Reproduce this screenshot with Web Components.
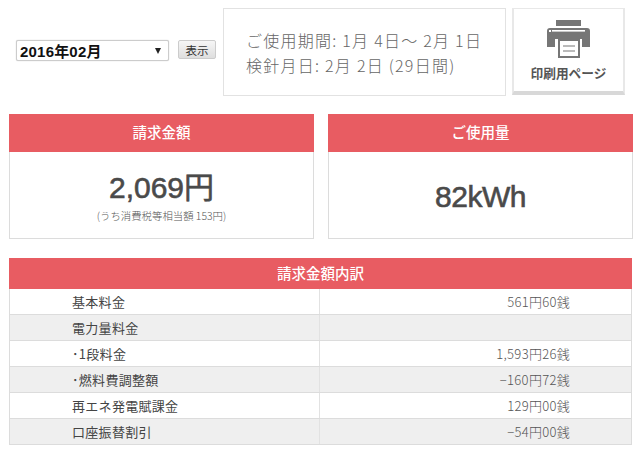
<!DOCTYPE html>
<html lang="ja">
<head>
<meta charset="utf-8">
<title>請求金額</title>
<style>
html, body { margin: 0; background: #fff; }
body { width: 640px; height: 452px; overflow: hidden; font-family: "Liberation Sans", "Noto Sans CJK JP", sans-serif; color: #444; }
</style>
</head>
<body>
<bill-page></bill-page>
<script>
'use strict';

class MonthPicker extends HTMLElement {
	constructor() {
		super();
		this.attachShadow({ mode: 'open' }).innerHTML = `
			<style>
				:host { display: flex; align-items: flex-start; gap: 9px; margin: 32px 7px 0 16px; }
				.select { box-sizing: border-box; width: 153px; height: 21px; display: flex; align-items: center; justify-content: space-between;
					padding: 0 7px 0 3px; border: 1px solid #ccc; border-radius: 2px; background: #fff; box-shadow: 0 0 1px #bbb;
					font: bold 15px "Liberation Sans", "Noto Sans CJK JP", sans-serif; letter-spacing: 0.200px; color: #111; }
				.arrow { width: 0; height: 0; border: 3px solid transparent; border-top: 6px solid #222; border-bottom: 0; }
				button { box-sizing: border-box; width: 38px; height: 19px; padding: 0; border: 1px solid #ccc; border-radius: 2px;
					background: linear-gradient(#f6f6f6, #dedede); font: 11.500px "Noto Sans CJK JP", sans-serif; color: #333; }
			</style>
			<div class="select"><span>2016年02月</span><span class="arrow"></span></div>
			<button type="button">表示</button>
		`;
	}
}

class PeriodBox extends HTMLElement {
	constructor() {
		super();
		this.attachShadow({ mode: 'open' }).innerHTML = `
			<style>
				:host { box-sizing: border-box; display: block; width: 283px; height: 88px; margin-right: 6px; padding: 19px 0 0 22px;
					border: 1px solid #e2e2e2; font: 300 16px/25px "Noto Sans CJK JP", sans-serif; letter-spacing: 1.250px; color: #666; white-space: nowrap; }
			</style>
			<div>ご使用期間: 1月 4日～ 2月 1日</div>
			<div>検針月日: 2月 2日 (29日間)</div>
		`;
	}
}

class PrintButton extends HTMLElement {
	constructor() {
		super();
		this.attachShadow({ mode: 'open' }).innerHTML = `
			<style>
				:host { box-sizing: border-box; display: flex; flex-direction: column; align-items: center; width: 113px; height: 87px; padding-top: 11px;
					border: 2px solid #e8e8e8; border-bottom: 4px solid #d8d8d8; border-top-width: 1px; background: #fff; }
				svg { display: block; }
				span { margin-top: 6px; font: bold 12.700px/18px "Noto Sans CJK JP", sans-serif; color: #555; }
			</style>
			<svg width="44" height="38" viewBox="0 0 44 38">
				<rect x="9" y="0" width="25" height="6" fill="#767676"/>
				<path d="M3 8h37a3 3 0 0 1 3 3v16h-8V19H8v8H0V11a3 3 0 0 1 3-3z" fill="#767676"/>
				<rect x="5" y="10" width="33" height="1.6" fill="#fff"/>
				<rect x="2" y="10" width="2" height="2" fill="#fff"/>
				<path d="M12 20h20v17H12z" fill="#fff" stroke="#767676" stroke-width="2"/>
				<path d="M16 26h12M16 31h12" stroke="#767676" stroke-width="1.200"/>
			</svg>
			<span>印刷用ページ</span>
		`;
	}
}

class SummaryCard extends HTMLElement {
	constructor() {
		super();
		this.attachShadow({ mode: 'open' }).innerHTML = `
			<style>
				:host { box-sizing: border-box; display: flex; flex-direction: column; width: 305px; height: 125px; border: 1px solid #dcdcdc; border-top: 0; }
				h2 { margin: 0 -1px; height: 38px; background: #e85c62; color: #fff; font: 500 14.500px/36px "Noto Sans CJK JP", sans-serif; text-align: center; }
				.body { flex: 1; display: flex; flex-direction: column; align-items: center; }
				::slotted([slot="amount"]) { font: 30px/38px "Liberation Sans", "Noto Sans CJK JP", sans-serif; -webkit-text-stroke: 0.600px #4a4a4a; color: #4a4a4a; margin-top: var(--amount-top, 17px); }
				::slotted([slot="note"]) { font: 300 10.400px/14px "Noto Sans CJK JP", sans-serif; color: #555; margin-top: 2px; }
			</style>
			<h2><slot name="title"></slot></h2>
			<div class="body"><slot name="amount"></slot><slot name="note"></slot></div>
		`;
	}
}

class BreakdownTable extends HTMLElement {
	constructor() {
		super();
		this.attachShadow({ mode: 'open' }).innerHTML = `
			<style>
				:host { display: block; width: 623px; margin-left: 9px; }
				h2 { margin: 0; height: 31px; background: #e85c62; color: #fff; font: 500 14.500px/30px "Noto Sans CJK JP", sans-serif; text-align: center; }
				.rows { border-left: 1px solid #dcdcdc; border-right: 1px solid #dcdcdc; }
			</style>
			<h2><slot name="title"></slot></h2>
			<div class="rows"><slot></slot></div>
		`;
	}
}

class BreakdownRow extends HTMLElement {
	constructor() {
		super();
		const value = this.getAttribute('value') || '';
		this.attachShadow({ mode: 'open' }).innerHTML = `
			<style>
				:host { box-sizing: border-box; display: grid; grid-template-columns: 310px 1fr; height: 26px; border-bottom: 1px solid #dcdcdc;
					font: 13px/25px "Noto Sans CJK JP", sans-serif; letter-spacing: 0.300px; color: #444; }
				:host(:nth-of-type(even)) { background: #efefef; }
				.label { padding-left: 62px; border-right: 1px solid #e2e2e2; }
				.value { padding-right: 61px; text-align: right; font-weight: 300; color: #555; }
			</style>
			<div class="label"><slot></slot></div>
			<div class="value">${value}</div>
		`;
	}
}

class BillPage extends HTMLElement {
	constructor() {
		super();
		this.attachShadow({ mode: 'open' }).innerHTML = `
			<style>
				:host { display: block; padding-top: 8px; }
				.top { display: flex; align-items: flex-start; }
				.cards { display: flex; gap: 14px; margin: 18px 0 19px 9px; }
				.usage { --amount-top: 26px; }
				.usage [slot="amount"] { letter-spacing: -0.500px; }
			</style>
			<div class="top">
				<month-picker></month-picker>
				<period-box></period-box>
				<print-button></print-button>
			</div>
			<div class="cards">
				<summary-card>
					<span slot="title">請求金額</span>
					<div slot="amount">2,069円</div>
					<div slot="note">(うち消費税等相当額 153円)</div>
				</summary-card>
				<summary-card class="usage">
					<span slot="title">ご使用量</span>
					<div slot="amount">82kWh</div>
				</summary-card>
			</div>
			<breakdown-table>
				<span slot="title">請求金額内訳</span>
				<breakdown-row value="561円60銭">基本料金</breakdown-row>
				<breakdown-row>電力量料金</breakdown-row>
				<breakdown-row value="1,593円26銭">･1段料金</breakdown-row>
				<breakdown-row value="−160円72銭">･燃料費調整額</breakdown-row>
				<breakdown-row value="129円00銭">再エネ発電賦課金</breakdown-row>
				<breakdown-row value="−54円00銭">口座振替割引</breakdown-row>
			</breakdown-table>
		`;
	}
}

customElements.define('month-picker', MonthPicker);
customElements.define('period-box', PeriodBox);
customElements.define('print-button', PrintButton);
customElements.define('summary-card', SummaryCard);
customElements.define('breakdown-table', BreakdownTable);
customElements.define('breakdown-row', BreakdownRow);
customElements.define('bill-page', BillPage);
</script>
</body>
</html>
